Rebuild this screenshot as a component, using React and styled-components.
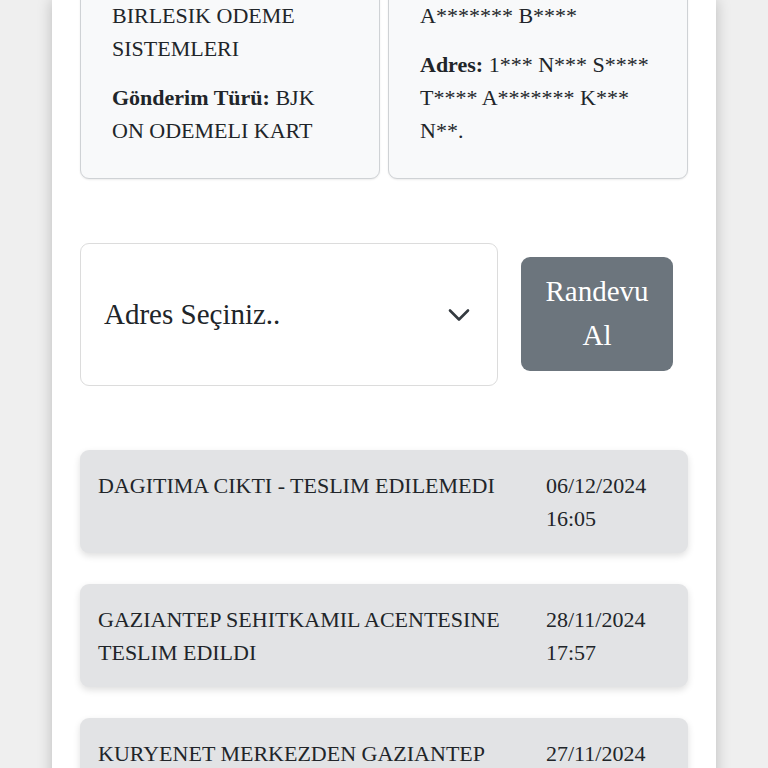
import React from "react";
import styled, { createGlobalStyle } from "styled-components";

const GlobalStyle = createGlobalStyle`
  html, body {
    margin: 0;
    padding: 0;
    background: #efefef;
    font-family: "Liberation Serif", "Times New Roman", serif;
    color: #212529;
    overflow: hidden;
  }
`;

const Page = styled.div`
  display: flex;
  justify-content: center;
  min-height: 100vh;
`;

const Panel = styled.div`
  width: 664px;
  background: #fff;
  box-shadow: 0 0 14px rgba(0, 0, 0, 0.22);
  padding: 0 28px 40px;
  box-sizing: border-box;
`;

/* page is scrolled down a bit in the reference */
const Scrolled = styled.div`
  margin-top: -67px;
`;

const InfoGrid = styled.div`
  display: grid;
  grid-template-columns: 1fr 1fr;
  gap: 8px;
`;

const InfoCard = styled.div`
  background: #f8f9fa;
  border: 1px solid #cfd2d5;
  border-radius: 9px;
  padding: 32px 31px 31px;
  font-size: 22px;
  line-height: 33px;
  box-shadow: 0 1px 2px rgba(0, 0, 0, 0.08);
`;

const InfoLine = styled.p`
  margin: 0;
  & + & {
    margin-top: 16px;
  }
  b {
    font-weight: 700;
  }
`;

const ActionRow = styled.div`
  display: flex;
  align-items: center;
  gap: 23px;
  margin-top: 64px;
  padding-right: 15px;
`;

const SelectBox = styled.div`
  width: 418px;
  height: 143px;
  box-sizing: border-box;
  border: 1px solid #dcdcdc;
  border-radius: 9px;
  display: flex;
  align-items: center;
  justify-content: space-between;
  padding: 0 27px 0 23px;
  font-size: 29px;
  color: #212529;
  background: #fff;
`;

const Button = styled.button`
  width: 152px;
  height: 114px;
  margin-top: -2px;
  border: none;
  border-radius: 9px;
  background: #6c757d;
  color: #fff;
  font-family: "Liberation Serif", "Times New Roman", serif;
  font-size: 29px;
  line-height: 44px;
  padding: 0 24px 2px;
`;

const Timeline = styled.div`
  display: flex;
  flex-direction: column;
  gap: 31px;
  margin-top: 64px;
`;

const Event = styled.div`
  display: grid;
  grid-template-columns: 1fr 124px;
  background: #e2e3e5;
  border-radius: 9px;
  padding: 19px 18px 18px;
  font-size: 22px;
  line-height: 33px;
  box-shadow: 0 3px 7px rgba(0, 0, 0, 0.13);
`;

const EventText = styled.div`
  padding-right: 20px;
`;

const EventDate = styled.div``;

const Chevron = () => (
  <svg width="22" height="14" viewBox="0 0 22 14" fill="none">
    <path d="M2 2.5l9 9 9-9" stroke="#343a40" strokeWidth="2.6" strokeLinecap="round" strokeLinejoin="round" />
  </svg>
);

const events = [
  { text: "DAGITIMA CIKTI - TESLIM EDILEMEDI", date: "06/12/2024 16:05" },
  { text: "GAZIANTEP SEHITKAMIL ACENTESINE TESLIM EDILDI", date: "28/11/2024 17:57" },
  { text: "KURYENET MERKEZDEN GAZIANTEP SEHITKAMIL ACENTESINE CIKTI", date: "27/11/2024 10:12" },
];

export default function App() {
  return (
    <Page>
      <GlobalStyle />
      <Panel>
        <Scrolled>
          <InfoGrid>
            <InfoCard>
              <InfoLine>
                <b>Gönderici Firma:</b> BIRLESIK ODEME SISTEMLERI
              </InfoLine>
              <InfoLine>
                <b>Gönderim Türü:</b> BJK ON ODEMELI KART
              </InfoLine>
            </InfoCard>
            <InfoCard>
              <InfoLine>
                <b>Alıcı Adı Soyadı:</b> A******* B****
              </InfoLine>
              <InfoLine>
                <b>Adres:</b> 1*** N*** S**** T**** A******* K*** N**.
              </InfoLine>
            </InfoCard>
          </InfoGrid>

          <ActionRow>
            <SelectBox>
              <span>Adres Seçiniz..</span>
              <Chevron />
            </SelectBox>
            <Button>Randevu Al</Button>
          </ActionRow>

          <Timeline>
            {events.map((e) => (
              <Event key={e.date}>
                <EventText>{e.text}</EventText>
                <EventDate>{e.date}</EventDate>
              </Event>
            ))}
          </Timeline>
        </Scrolled>
      </Panel>
    </Page>
  );
}
